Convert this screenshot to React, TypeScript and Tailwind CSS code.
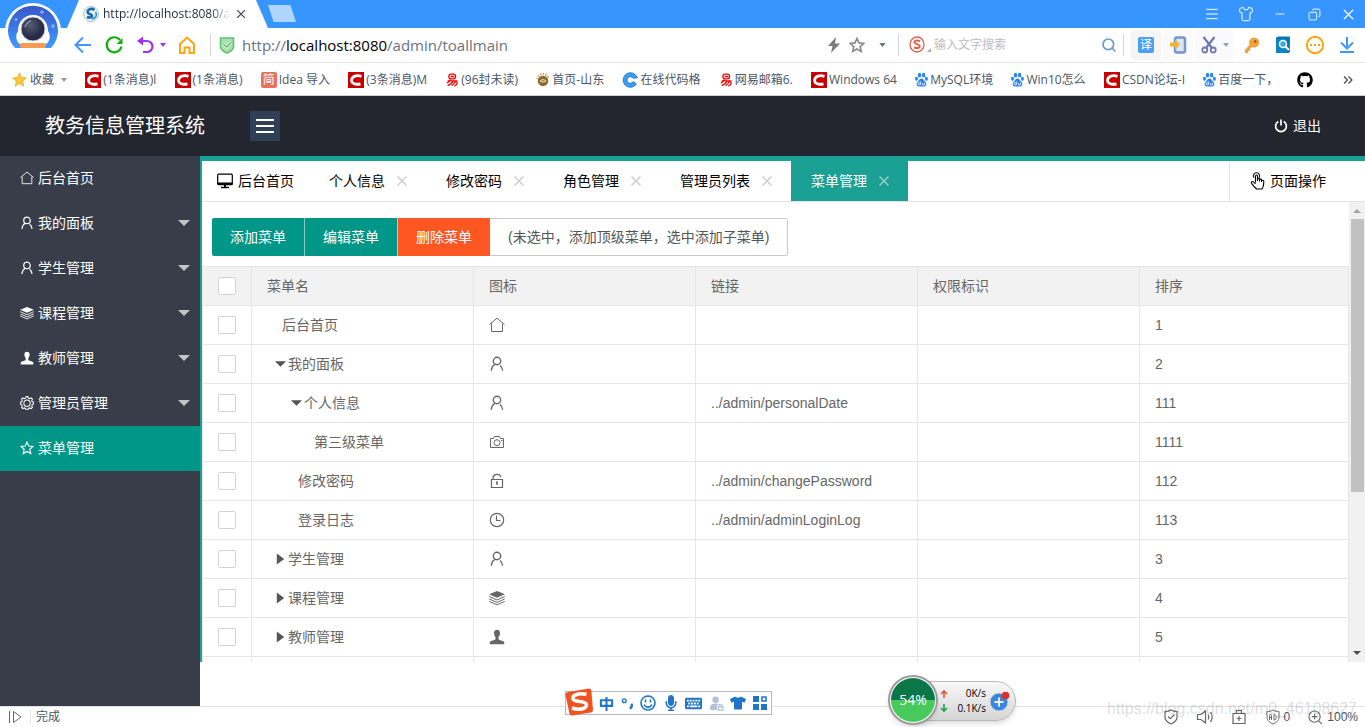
import { useState } from "react";
import type { ReactNode } from "react";
import { Copy, Menu, Minus, Search, Shirt, X } from "lucide-react";
import { FaGithub, FaKeyboard, FaMicrophone, FaTshirt } from "react-icons/fa";

type IconName =
  | "home"
  | "user"
  | "layers"
  | "username"
  | "gear"
  | "star"
  | "camera"
  | "lock"
  | "clock";

const UI_FONT = "[font-family:'Liberation_Sans','Noto_Sans_CJK_SC',sans-serif]";
const CHROME_FONT = "[font-family:'Open_Sans','Noto_Sans_CJK_SC',sans-serif]";

const menus: { name: string; icon: IconName; children: boolean }[] = [
  { name: "后台首页", icon: "home", children: false },
  { name: "我的面板", icon: "user", children: true },
  { name: "学生管理", icon: "user", children: true },
  { name: "课程管理", icon: "layers", children: true },
  { name: "教师管理", icon: "username", children: true },
  { name: "管理员管理", icon: "gear", children: true },
  { name: "菜单管理", icon: "star", children: false },
];

const tabs = ["个人信息", "修改密码", "角色管理", "管理员列表", "菜单管理"];

const rows: {
  name: string;
  icon: IconName;
  link: string;
  sort: string;
  pad: string;
  arrow?: "open" | "closed";
}[] = [
  { name: "后台首页", icon: "home", link: "", sort: "1", pad: "pl-[30px]" },
  { name: "我的面板", icon: "user", link: "", sort: "2", pad: "pl-[22px]", arrow: "open" },
  { name: "个人信息", icon: "user", link: "../admin/personalDate", sort: "111", pad: "pl-[38px]", arrow: "open" },
  { name: "第三级菜单", icon: "camera", link: "", sort: "1111", pad: "pl-[62px]" },
  { name: "修改密码", icon: "lock", link: "../admin/changePassword", sort: "112", pad: "pl-[46px]" },
  { name: "登录日志", icon: "clock", link: "../admin/adminLoginLog", sort: "113", pad: "pl-[46px]" },
  { name: "学生管理", icon: "user", link: "", sort: "3", pad: "pl-[22px]", arrow: "closed" },
  { name: "课程管理", icon: "layers", link: "", sort: "4", pad: "pl-[22px]", arrow: "closed" },
  { name: "教师管理", icon: "username", link: "", sort: "5", pad: "pl-[22px]", arrow: "closed" },
];

const bookmarks: { icon: string; text: string }[] = [
  { icon: "csdn", text: "(1条消息)l" },
  { icon: "csdn", text: "(1条消息)" },
  { icon: "jian", text: "Idea 导入" },
  { icon: "csdn", text: "(3条消息)M" },
  { icon: "netease", text: "(96封未读)" },
  { icon: "school", text: "首页-山东" },
  { icon: "code", text: "在线代码格" },
  { icon: "netease", text: "网易邮箱6." },
  { icon: "csdn", text: "Windows 64" },
  { icon: "baidu", text: "MySQL环境" },
  { icon: "baidu", text: "Win10怎么" },
  { icon: "csdn", text: "CSDN论坛-I" },
  { icon: "baidu", text: "百度一下，" },
];

function MenuIcon({ name, className }: { name: IconName; className: string }) {
  return (
    <svg viewBox="0 0 16 16" className={className} fill="none" stroke="currentColor" aria-hidden="true">
      {name === "home" && <path d="M.5 7.500 8 1.200l7.500 6.300M2.500 6.500v8h11v-8" />}
      {name === "user" && (
        <g strokeWidth="1.400">
          <circle cx="8" cy="5" r="3.700" />
          <path d="M6 8.300C3.800 9.500 2.500 11.500 2.300 14.800M11 9.500c1.600 1.200 2.500 3 2.700 5.300" />
        </g>
      )}
      {name === "layers" && (
        <>
          <path d="M8 1 15.800 4.300 8 7.800.2 4.300z" fill="currentColor" stroke="none" />
          <path d="M.3 6.500 8 10l7.700-3.500M.3 9 8 12.400 15.700 9M.3 11.400 8 14.800l7.700-3.400" />
        </>
      )}
      {name === "username" && (
        <path
          d="M8 .8c-2 0-3 1.300-3 3.300 0 1.700.7 3.300 1.500 4.100v1.700C6.300 11.200 1.500 11.600.8 13v2.300h14.400V13c-.7-1.400-5.500-1.800-5.700-3.100V8.200C10.300 7.400 11 5.800 11 4.100 11 2.100 10 .8 8 .8z"
          fill="currentColor"
          stroke="none"
        />
      )}
      {name === "gear" && (
        <g strokeWidth="1.200">
          <path d="M6.400 2.400 7 .7h2l.6 1.700 1.500.6 1.700-.8 1.400 1.400-.8 1.700.6 1.400 1.600.5v2l-1.600.6-.6 1.500.8 1.600-1.400 1.400-1.700-.7-1.500.6-.6 1.600H7l-.6-1.600-1.500-.6-1.700.7-1.400-1.400.8-1.600L2 9.800.4 9.200v-2L2 6.700l.6-1.400-.8-1.700 1.400-1.400 1.700.8z" />
          <circle cx="8" cy="8.200" r="3.600" />
        </g>
      )}
      {name === "star" && (
        <path d="m8 1.300 2 4.500 4.800.5-3.600 3.200 1.100 4.900L8 11.900l-4.300 2.500 1.100-4.900L1.200 6.300 6 5.800z" strokeWidth="1.300" />
      )}
      {name === "camera" && (
        <>
          <path d="M1.500 4.500h3l1-2h5l1 2h3v9h-13z" />
          <circle cx="8" cy="8.700" r="3" />
          <path d="M12 6.500h1.500" />
        </>
      )}
      {name === "lock" && (
        <>
          <path d="M2.500 6.500h11v8h-11zM4 6.500V4.300C4.500 2 6 1.300 8 1.300s3.500.7 4 2.500" strokeWidth="1.200" />
          <path d="M7 9.200h2M8 9v3" strokeWidth="1.400" />
        </>
      )}
      {name === "clock" && (
        <>
          <circle cx="8" cy="8" r="6.700" strokeWidth="1.200" />
          <path d="M7.500 3.500v5h4" strokeWidth="1.200" />
        </>
      )}
    </svg>
  );
}

function BookmarkIcon({ type }: { type: string }) {
  if (type === "csdn") {
    return (
      <svg viewBox="0 0 16 16" className="size-4 shrink-0">
        <path fill="#c80000" d="M0 0h16v16H0z" />
        <path d="M13.500 4.300C9 2.800 4 4 3.600 8c-.3 3.800 4.200 5 8.900 3.800" fill="none" stroke="#fff" strokeWidth="2.800" />
      </svg>
    );
  }
  if (type === "jian") {
    return (
      <span className="flex size-4 shrink-0 items-center justify-center rounded-xs bg-[#ea6f5a] text-xs text-white">简</span>
    );
  }
  if (type === "netease") {
    return (
      <svg viewBox="0 0 16 16" className="h-4 w-[14px] shrink-0" fill="none" stroke="#f00000" strokeWidth="1.500">
        <rect x="4.500" y="1.200" width="7.500" height="5.600" rx="2.400" />
        <path d="M6.500 4h4M3 9h10.500c1 3.500-.5 5.500-3 5.800M6 7.500C5 10 3.500 11 2 11.500M9 9.500c-1 2.500-3 4-6 4.800M12 9.500c-1 2-2 3.800-4.500 5" />
      </svg>
    );
  }
  if (type === "school") {
    return (
      <svg viewBox="0 0 16 16" className="size-[14px] shrink-0">
        <path d="M2 7a6 6 0 0 1 12 0" fill="none" stroke="#c7a869" strokeWidth="3" strokeDasharray="1.500 1.500" />
        <circle cx="8" cy="9" r="6" fill="#8a6a2c" />
        <path d="M4 9c2-2.500 6-2.500 8 0-2 2.500-6 2.500-8 0z" fill="#e5d8b8" />
        <path d="M6 9h4" stroke="#7f6228" />
      </svg>
    );
  }
  if (type === "code") {
    return (
      <svg viewBox="0 0 16 16" className="size-4 shrink-0">
        <path d="M13.500 2.800A7.300 7.300 0 1 0 14.500 12l-3.200-2.500a3.300 3.300 0 1 1-.2-3.300l4.300-.4z" fill="#35a0ff" stroke="#1c6fb8" strokeWidth=".8" />
      </svg>
    );
  }
  return (
    <svg viewBox="0 0 14 16" className="h-[15px] w-[13px] shrink-0" fill="#2b84f5">
      <ellipse cx="4.800" cy="3.300" rx="1.800" ry="2.600" />
      <ellipse cx="9.300" cy="3.300" rx="1.800" ry="2.600" />
      <ellipse cx="1.700" cy="7.300" rx="1.600" ry="2.200" />
      <ellipse cx="12.300" cy="7.300" rx="1.600" ry="2.200" />
      <path d="M7 7c-2 0-2.500 2-4 3.500C1 12.300 1.500 15.500 4 15.500h6c2.500 0 3-3.200 1-5C9.500 9 9 7 7 7z" />
      <path d="M5.800 10v3.800H4.200c-1.200 0-1.200-2.300 0-2.300h1.600M8 11.500v2.300h2.300v-2.300" fill="none" stroke="#fff" strokeWidth=".8" />
    </svg>
  );
}

function Caret({ className = "text-gray-500" }: { className?: string }) {
  return (
    <svg viewBox="0 0 8 5" className={`h-1 w-[7px] shrink-0 ${className}`}>
      <path d="M0 0h8L4 5z" fill="currentColor" />
    </svg>
  );
}

function TitleBar() {
  return (
    <div className="flex h-7 items-end bg-[#3795ff] pl-[67px]">
      <div className="flex h-7 w-[201px] items-center bg-white pr-5 pl-4 [clip-path:polygon(12px_0,189px_0,100%_100%,0_100%)]">
        <svg viewBox="0 0 16 16" className="size-4 shrink-0">
          <circle cx="8" cy="8" r="7.500" fill="#e8eef2" stroke="#b9c4cb" />
          <path d="M11.500 4C8 1.500 3.500 4 5 6.800c1 1.700 4 1.500 4 3.200 0 1.500-2.500 2-5 1" fill="none" stroke="#126cb4" strokeWidth="2.600" />
          <path d="M9 13c4-.5 5.500-4.500 3.500-7" fill="none" stroke="#1d8fd0" strokeWidth="1.600" />
        </svg>
        <span className="ml-1 w-[132px] bg-gradient-to-r from-gray-800 from-85% to-white bg-clip-text text-xs leading-7 whitespace-nowrap text-transparent">
          http://localhost:8080/a
        </span>
        <button aria-label="关闭标签" className="ml-1">
          <X size={14} strokeWidth={2} className="text-gray-600" />
        </button>
      </div>
      <button aria-label="新建标签" className="mb-[6px] h-[17px] w-7 bg-[#afd5ff] [clip-path:polygon(0_0,80%_0,100%_100%,20%_100%)]" />
      <div className="ml-auto flex h-7 text-white">
        <button aria-label="菜单" className="flex w-[34px] items-center justify-center"><Menu size={16} strokeWidth={1.500} /></button>
        <button aria-label="皮肤" className="flex w-[34px] items-center justify-center"><Shirt size={16} strokeWidth={1.500} /></button>
        <button aria-label="最小化" className="flex w-[34px] items-center justify-center"><Minus size={14} strokeWidth={1.500} /></button>
        <button aria-label="还原" className="flex w-[34px] items-center justify-center"><Copy size={13} strokeWidth={1.700} className="-scale-x-100" /></button>
        <button aria-label="关闭" className="flex w-[34px] items-center justify-center"><X size={17} strokeWidth={1.700} /></button>
      </div>
    </div>
  );
}

function AddressBar() {
  return (
    <div className="flex h-[35px] items-center border-b border-gray-200 bg-white pr-[10px] pl-[74px]">
      <button aria-label="后退" className="mr-3">
        <svg viewBox="0 0 18 18" className="size-[18px]" fill="none" stroke="#3f96fb" strokeWidth="2">
          <path d="M17 9H2M9 1.500 1.500 9 9 16.500" />
        </svg>
      </button>
      <button aria-label="刷新" className="mr-3">
        <svg viewBox="0 0 20 20" className="size-5" fill="none" stroke="#12b012" strokeWidth="2.200">
          <path d="M17.500 11.500A7.500 7.500 0 1 1 16 5" />
          <path d="M18.500 3v6h-6z" fill="#12b012" stroke="none" />
        </svg>
      </button>
      <button aria-label="撤销" className="mr-3 flex items-center gap-[6px]">
        <svg viewBox="0 0 18 18" className="size-[18px]" fill="none" stroke="#a033f0" strokeWidth="2.200">
          <path d="M4 5h7a5.500 5.500 0 0 1 0 11H7" />
          <path d="M7 .5v9L1 5z" fill="#a033f0" stroke="none" />
        </svg>
        <svg viewBox="0 0 6 4" className="h-1 w-[6px]"><path d="M0 0h6L3 4z" fill="#a033f0" /></svg>
      </button>
      <button aria-label="主页" className="mr-[14px]">
        <svg viewBox="0 0 18 18" className="size-[18px]" fill="none" stroke="#ffa30f" strokeWidth="2">
          <path d="M2 8 9 1.500 16 8v9h-4.500v-5.500h-5V17H2z" />
        </svg>
      </button>
      <span className="h-[22px] w-px bg-gray-300" />
      <svg viewBox="0 0 16 18" className="mr-[7px] ml-2 h-[18px] w-4" fill="none" stroke="#5cc16a">
        <path d="M1.500 2h13v9c0 2.500-3 4.500-6.500 6-3.500-1.500-6.500-3.500-6.500-6z" fill="#a9e0b0" strokeWidth="1.500" />
        <path d="m4.500 8 3 3 4.500-4.500" stroke="#fff" strokeWidth="3" />
        <path d="m4.500 8 3 3 4.500-4.500" strokeWidth="1.500" />
      </svg>
      <div role="textbox" aria-label="地址栏" className="min-w-0 flex-1 truncate text-[15px] text-gray-500">
        http://<span className="text-black">localhost:8080</span>/admin/toallmain
      </div>
      <svg viewBox="0 0 14 18" className="mr-2 h-[18px] w-[14px]" fill="#7c7c7c">
        <path d="M9 1 1 10h4.500L4 17l9-9.500H8z" />
      </svg>
      <button aria-label="收藏此页" className="mr-[14px]">
        <svg viewBox="0 0 16 16" className="size-4" fill="none" stroke="#8b8b8b" strokeWidth="1.700">
          <path d="m8 1.500 2 4.400 4.700.6-3.500 3.200 1 4.700L8 12l-4.200 2.400 1-4.700L1.300 6.500 6 5.900z" />
        </svg>
      </button>
      <Caret />
      <span className="mr-[10px] ml-3 h-[22px] w-px bg-gray-300" />
      <svg viewBox="0 0 22 18" className="mr-[3px] h-[18px] w-[22px]" fill="none" stroke="#e2604e">
        <ellipse cx="8" cy="8.500" rx="7" ry="7.500" strokeWidth="1.300" />
        <path d="M11 5.300C8 3.800 5 4.800 5.500 6.800c.5 1.500 5 1.300 5.200 3.300.1 2-3.200 2.500-5.700 1.200" strokeWidth="2" />
        <path d="M22 12v4h-4z" fill="#aaa" stroke="none" />
      </svg>
      <input aria-label="搜索" placeholder="输入文字搜索" className="w-[167px] text-xs outline-none placeholder:text-[#bcbcbc]" />
      <button aria-label="开始搜索" className="mr-[6px]">
        <Search size={16} strokeWidth={2.500} className="text-[#6c9ac8]" />
      </button>
      <span className="mr-[7px] h-[22px] w-px bg-gray-300" />
      <button aria-label="翻译" className="mr-[2px] flex h-[30px] w-[30px] items-center justify-center rounded bg-[#f5f5f5]">
        <span className="flex size-4 items-center justify-center rounded-xs bg-[#4a9ff5] text-xs text-white">译</span>
      </button>
      <button aria-label="手机" className="mr-[2px] flex h-[30px] w-[30px] items-center justify-center rounded bg-[#fafafa]">
        <svg viewBox="0 0 18 18" className="size-[18px]">
          <rect x="6" y="1.500" width="10" height="15" rx="2" fill="#dbe6f5" stroke="#7497cb" strokeWidth="2.500" />
          <path d="M1 6.500h5V3l5 5.500L6 14v-3.500H1z" fill="#f9b136" />
        </svg>
      </button>
      <button aria-label="截图" className="mr-[10px] flex h-[30px] w-[39px] items-center justify-center gap-[6px] rounded bg-[#fafafa]">
        <svg viewBox="0 0 16 18" className="h-[18px] w-4" fill="none" stroke="#6f78b8" strokeWidth="2.200">
          <path d="m2.500 1 8.500 11M13.500 1 5 12" />
          <circle cx="3.800" cy="14" r="2.500" strokeWidth="1.800" />
          <circle cx="12.200" cy="14" r="2.500" strokeWidth="1.800" />
        </svg>
        <svg viewBox="0 0 6 4" className="h-1 w-[6px] text-gray-400"><path d="M0 0h6L3 4z" fill="currentColor" /></svg>
      </button>
      <button aria-label="密码" className="mr-[15px]">
        <svg viewBox="0 0 16 18" className="h-[18px] w-4">
          <path d="M10 1.500a5 5 0 0 0-4.500 7L1 14v3h3v-2h2v-2.200l2-1.800a5 5 0 1 0 2-9.500z" fill="#f3a23a" />
          <circle cx="11.200" cy="5.500" r="1.400" fill="#a9652a" />
        </svg>
      </button>
      <button aria-label="查找" className="mr-[14px]">
        <svg viewBox="0 0 16 18" className="h-[18px] w-4">
          <path d="M1 2 3 .5h12v15L13.500 17H1z" fill="#0b86c5" />
          <path d="M1 2h12v15" fill="none" stroke="#07639a" />
          <circle cx="8" cy="8" r="3.500" fill="#3ba9e0" stroke="#fff" strokeWidth="1.500" />
          <path d="m10.500 10.500 3.500 3.500" stroke="#fff" strokeWidth="2" />
        </svg>
      </button>
      <button aria-label="更多" className="mr-[14px]">
        <svg viewBox="0 0 20 20" className="size-5">
          <circle cx="10" cy="10" r="8.200" fill="none" stroke="#ffa60d" strokeWidth="2" />
          <path d="M5 9h2v2H5zM9 9h2v2H9zM13 9h2v2h-2z" fill="#ffa60d" />
        </svg>
      </button>
      <button aria-label="下载">
        <svg viewBox="0 0 16 18" className="h-[18px] w-4" fill="none" stroke="#3e97fc" strokeWidth="2">
          <path d="M8 1v11M2 6.500l6 6 6-6M1 16h14" />
        </svg>
      </button>
    </div>
  );
}

function Bookmarks() {
  return (
    <nav className="flex h-[33px] items-center justify-between border-b border-[#ccc] bg-white pt-px pr-3 pl-3 text-xs whitespace-nowrap text-gray-600">
      <a href="#" className="flex items-center gap-[3px]">
        <svg viewBox="0 0 16 16" className="size-[15px]">
          <path d="m8 .8 2.200 4.900 5.300.6-4 3.600 1.200 5.300L8 12.400l-4.700 2.800 1.200-5.300-4-3.600 5.300-.6z" fill="#f8c73b" stroke="#e0a52a" strokeWidth=".6" />
        </svg>
        收藏
        <svg viewBox="0 0 6 4" className="ml-1 h-1 w-[6px]"><path d="M0 0h6L3 4z" fill="#999" /></svg>
      </a>
      {bookmarks.map((item, idx) => (
        <a href="#" key={idx} className="flex items-center gap-[2px]">
          <BookmarkIcon type={item.icon} />
          {item.text}
        </a>
      ))}
      <a href="#" aria-label="GitHub"><FaGithub size={16} className="text-black" /></a>
      <button aria-label="更多书签" className="pl-3">
        <svg viewBox="0 0 10 8" className="h-2 w-[10px]" fill="none" stroke="#444" strokeWidth="1.200">
          <path d="m1 .5 3.500 3.500L1 7.500M5.500.5 9 4 5.500 7.500" />
        </svg>
      </button>
    </nav>
  );
}

function Astronaut() {
  return (
    <svg viewBox="0 0 56 50" className="absolute top-[2px] left-[5px] h-[50px] w-14">
      <defs>
        <linearGradient id="sky" x1="0" y1="0" x2="0" y2="1">
          <stop offset="0" stopColor="#3a56c8" />
          <stop offset="1" stopColor="#3d9bff" />
        </linearGradient>
        <radialGradient id="visor" cx=".4" cy=".35">
          <stop offset="0" stopColor="#555a72" />
          <stop offset="1" stopColor="#262a45" />
        </radialGradient>
      </defs>
      <circle cx="28" cy="29" r="28" fill="#fff" />
      <path d="M10 46A25 25 0 1 1 46 46z" fill="url(#sky)" />
      <path d="M37 8v4M35 10h4M11 16v3M9.500 17.500h3M48 22v4M46 24h4" stroke="#9dc2ff" />
      <path d="M15 42c-4-2-5-9-2-13 0-9 6-16 15-16s15 7 15 16c3 4 2 11-2 13z" fill="#fff" />
      <circle cx="28" cy="27" r="12" fill="url(#visor)" stroke="#c9cede" />
      <path d="M20 25a9 9 0 0 1 6-6" fill="none" stroke="#8b90a8" strokeWidth="1.500" />
      <rect x="15" y="41" width="26" height="5" rx="2" fill="#f59b52" />
    </svg>
  );
}

function Sidebar() {
  const [active, setActive] = useState("菜单管理");
  return (
    <aside className="w-[200px] shrink-0 bg-[#393d49] text-sm text-white">
      {menus.map((menu) => (
        <a
          href="#"
          key={menu.name}
          onClick={() => setActive(menu.name)}
          className={`flex h-[45px] items-center pr-[10px] pb-[2px] pl-5 ${active === menu.name ? "bg-[#009688]" : ""}`}
        >
          <MenuIcon name={menu.icon} className="mr-1 size-[14px] shrink-0" />
          {menu.name}
          {menu.children && (
            <svg viewBox="0 0 12 6" className="ml-auto h-[6px] w-3"><path d="M0 0h12L6 6z" fill="#c4c5c9" /></svg>
          )}
        </a>
      ))}
    </aside>
  );
}

function TabBar() {
  return (
    <div className="flex h-[41px] shrink-0 border-b border-[#e2e2e2] text-sm text-black">
      <button className="flex w-[107px] items-center gap-1 pl-[14px]">
        <svg viewBox="0 0 18 16" className="h-4 w-[18px]" fill="none" stroke="currentColor">
          <rect x="1.700" y="1.200" width="14.600" height="10.500" rx="1" strokeWidth="1.200" />
          <path d="M1.500 10.500h15M9 12v2" strokeWidth="2" />
          <path d="M5 14.500h8" strokeWidth="1.400" />
        </svg>
        后台首页
      </button>
      {tabs.map((tab) => (
        <div
          key={tab}
          className={`flex items-center gap-3 pr-[19px] pl-5 ${tab === "菜单管理" ? "bg-[#1aa094] text-white" : ""}`}
        >
          <button>{tab}</button>
          <button aria-label={`关闭${tab}`}>
            <svg viewBox="0 0 10 10" className="size-[10px]" stroke={tab === "菜单管理" ? "#a5cfcb" : "#c9c9c9"} strokeWidth="1.300">
              <path d="m.5.5 9 9M9.500.5l-9 9" />
            </svg>
          </button>
        </div>
      ))}
      <button className="ml-auto flex w-[136px] items-center gap-1 border-l border-[#e2e2e2] pl-5">
        <svg viewBox="0 0 16 18" className="h-[18px] w-4" fill="none" stroke="currentColor" strokeWidth="1.100">
          <path d="M5.500 10.500V4.200c0-1.600 2-1.600 2 0V9M7.500 9V7.200c0-1.200 2-1.200 2 0V9.500M9.500 8c0-1.200 2-1.200 2 0v2M11.500 9c0-1.100 2.300-1.100 2.300.3 0 3 .2 5-1.800 7.700H6.500C4.500 15 3 13.300 1.500 11.300c-.6-1.300.7-2.300 1.900-1.400l2.100 2" />
          <path d="M4 5.800C2.500 3.500 4 .8 6.500.8s4 2.700 2.500 5" />
        </svg>
        页面操作
      </button>
    </div>
  );
}

function Check({ label }: { label: string }) {
  return (
    <input
      type="checkbox"
      aria-label={label}
      className="block size-[18px] appearance-none rounded-xs border border-[#d2d2d2] bg-white checked:bg-[#009688]"
    />
  );
}

function Cell({ className = "px-[15px]", children }: { className?: string; children?: ReactNode }) {
  return <td className={`h-[39px] border-r border-b border-[#e6e6e6] ${className}`}>{children}</td>;
}

function MenuTable() {
  return (
    <table className="w-full table-fixed border-separate border-spacing-0 border-t border-l border-[#e6e6e6] text-left text-sm text-[#666]">
      <thead className="bg-[#f2f2f2]">
        <tr>
          <th className="h-[39px] w-[49px] border-r border-b border-[#e6e6e6] pl-[15px]"><Check label="全选" /></th>
          {["菜单名", "图标", "链接", "权限标识"].map((title) => (
            <th key={title} className="w-[222px] border-r border-b border-[#e6e6e6] px-[15px] font-normal">{title}</th>
          ))}
          <th className="border-r border-b border-[#e6e6e6] px-[15px] font-normal">排序</th>
        </tr>
      </thead>
      <tbody>
        {rows.map((row) => (
          <tr key={row.sort}>
            <Cell className="pl-[15px]"><Check label={row.name} /></Cell>
            <Cell className={row.pad}>
              <span className="flex items-center">
                {row.arrow && (
                  <svg viewBox="0 0 14 12" className="mr-px h-3 w-[13px]" fill="#555">
                    {row.arrow === "open" ? <path d="M1 3h12L7 9z" /> : <path d="M3 0v12l8-6z" />}
                  </svg>
                )}
                {row.name}
              </span>
            </Cell>
            <Cell><MenuIcon name={row.icon} className="size-4" /></Cell>
            <Cell>{row.link}</Cell>
            <Cell />
            <Cell>{row.sort}</Cell>
          </tr>
        ))}
        {/* next row, cut by the bottom of the frame */}
        <tr><Cell /><Cell /><Cell /><Cell /><Cell /><Cell /></tr>
      </tbody>
    </table>
  );
}

function ScrollBar() {
  return (
    <div className="flex w-4 shrink-0 flex-col items-center bg-[#f1f1f1]">
      <svg viewBox="0 0 16 17" className="h-[17px] w-4"><path d="M4 11h8L8 7z" fill="#a3a3a3" /></svg>
      <div className="w-full flex-1 pr-px pl-[2px]">
        <div className="h-[64%] bg-[#c1c1c1]" />
      </div>
      <svg viewBox="0 0 16 17" className="h-[17px] w-4"><path d="M4 6h8l-4 4z" fill="#505050" /></svg>
    </div>
  );
}

function InputMethodBar() {
  return (
    <div className="absolute bottom-3 left-[565px] flex h-6 w-[207px] items-center justify-between border border-[#b4b8c0] bg-white pr-[4px] pl-[33px] text-[#2175c8]">
      <svg viewBox="0 0 28 28" className="absolute -top-1 -left-px size-7">
        <path d="M3 4 24 .5q2 0 2.300 1.800L28 22q0 2-2 2.500L7 27.500q-2 .2-2.500-1.800L.5 7Q.5 4.500 3 4z" fill="#f0531f" />
        <path d="M21.500 6.500C14 4.500 7 7 8 11c1 3.500 13 1.500 13.500 5.500C22 21 13 22.500 7 20" fill="none" stroke="#fff" strokeWidth="3.600" />
      </svg>
      <svg viewBox="0 0 16 16" className="size-[15px]" fill="none" stroke="currentColor" strokeWidth="2.200">
        <path d="M2 4.500h12v6H2zM8 1v15" />
      </svg>
      <svg viewBox="0 0 14 14" className="size-[13px]" fill="none" stroke="currentColor" strokeWidth="1.500">
        <circle cx="3.500" cy="4" r="2" />
        <path d="M11 7.500c1.500 1.500.5 4-1.500 5" strokeWidth="2.600" />
      </svg>
      <svg viewBox="0 0 16 16" className="size-4" fill="none" stroke="currentColor" strokeWidth="1.600">
        <circle cx="8" cy="8" r="7" />
        <path d="M5.500 4.500v3M10.500 4.500v3M4 9.500c1.500 3.500 6.500 3.500 8 0" />
      </svg>
      <FaMicrophone size={16} />
      <FaKeyboard size={17} />
      <svg viewBox="0 0 16 16" className="size-[15px]" fill="#b4c0d8">
        <circle cx="7" cy="4" r="3.500" />
        <path d="M1 15c0-4 1-7 6-7 2 0 3 .5 4 1.500H8.500V15z" />
        <path d="M10 11.500h5V15h-5zM11.200 11V9.500h2.600V11" fill="none" stroke="#b4c0d8" strokeWidth="1.300" />
      </svg>
      <FaTshirt size={16} />
      <svg viewBox="0 0 14 14" className="size-[14px]" fill="currentColor">
        <path d="M0 0h6v6H0zM0 8h6v6H0zM8 8h6v6H8z" />
        <path d="M9 1h4v4H9z" fill="none" stroke="currentColor" strokeWidth="1.600" />
      </svg>
    </div>
  );
}

function SpeedBall() {
  return (
    <div className="absolute right-[349px] bottom-[6px] flex h-10 w-[108px] items-center rounded-r-full border border-[#b9b9b9] bg-gradient-to-b from-[#f8f8f8] to-[#d5d5d5] pl-[31px] text-[10px] text-black shadow-md [font-family:'Open_Sans',sans-serif]">
      <div className="absolute -top-[7px] -left-[21px] flex size-[50px] items-center justify-center rounded-full border-2 border-[#9c9c9c] bg-white p-px shadow-md">
        <div className="flex size-full items-center justify-center rounded-full bg-gradient-to-b from-[#0b7748] from-50% to-[#47c95c] to-50% text-sm text-white">54%</div>
      </div>
      <svg viewBox="0 0 8 24" className="h-6 w-2" fill="none" strokeWidth="1.600">
        <path d="M4 9V2M1 5l3-3 3 3" stroke="#e8543a" />
        <path d="M4 15v7M1 19l3 3 3-3" stroke="#1f9d50" />
      </svg>
      <div className="flex-1 text-right leading-[15px]">
        <p>0K/s</p>
        <p>0.1K/s</p>
      </div>
      <svg viewBox="0 0 22 22" className="mr-1 ml-[3px] size-[22px]">
        <circle cx="10" cy="12" r="9" fill="#3b86dc" stroke="#cfd5dd" />
        <path d="M10 7.500v9M5.500 12h9" stroke="#e5f1ff" strokeWidth="2" />
        <circle cx="16.500" cy="5.500" r="3.800" fill="#d9302c" />
      </svg>
    </div>
  );
}

function StatusBar() {
  return (
    <footer className="flex h-[21px] shrink-0 items-center border-t border-[#e2e2e2] bg-white pr-[7px] pl-2 text-xs text-gray-600">
      <svg viewBox="0 0 16 14" className="h-[14px] w-4" fill="none" stroke="#666">
        <path d="M1.500 1v12M5.500 1.500v11L13 7z" />
      </svg>
      <span className="mr-[5px] ml-[6px] h-4 w-px bg-gray-200" />
      <span className="mr-auto">完成</span>
      <svg viewBox="0 0 14 16" className="mr-[18px] h-4 w-[14px]" fill="none" stroke="#666" strokeWidth="1.200">
        <path d="M7 1c2 1.200 4 1.500 6 1.500v6c0 3-3 5-6 6.500-3-1.500-6-3.500-6-6.500v-6C3 2.500 5 2.200 7 1z" />
        <path d="m4 7.500 2.200 2.200L10.500 5.500" />
      </svg>
      <svg viewBox="0 0 18 16" className="mr-[18px] h-4 w-[18px]" fill="none" stroke="#666" strokeWidth="1.200">
        <path d="M1.500 5.500H5L9.500 2v12L5 10.500H1.500zM12 5.500c1 1.500 1 3.500 0 5M14.500 3c2 3 2 7 0 10" />
      </svg>
      <svg viewBox="0 0 14 16" className="mr-5 h-4 w-[14px]" fill="none" stroke="#666" strokeWidth="1.200">
        <path d="M1 4.500h12v10H1zM4.500 4.500V1.500h5v3M7 7v5M4.500 9.500h5" />
      </svg>
      <svg viewBox="0 0 14 16" className="mr-1 h-4 w-[14px]" fill="none" stroke="#666">
        <path d="M7 1c2 1.200 4 1.500 6 1.500v6c0 3-3 5-6 6.500-3-1.500-6-3.500-6-6.500v-6C3 2.500 5 2.200 7 1z" />
        <path d="M3.500 11V6.500L4.500 5l1 1.500V11M3.500 8.500h2M8 5.500V11c3 0 3-5.500 0-5.500z" />
      </svg>
      <span className="mr-[18px]">0</span>
      <svg viewBox="0 0 16 16" className="mr-1 size-[15px]" fill="none" stroke="#666" strokeWidth="1.200">
        <circle cx="7" cy="7" r="6" />
        <path d="m11.500 11.500 3.500 3.500M7 4v6M4 7h6" />
      </svg>
      <span>100%</span>
    </footer>
  );
}

export default function App() {
  return (
    <div className={`relative flex h-screen flex-col overflow-hidden bg-white ${UI_FONT}`}>
      <header className={`relative shrink-0 ${CHROME_FONT}`}>
        <TitleBar />
        <AddressBar />
        <Bookmarks />
        <Astronaut />
      </header>

      <div className="flex h-[60px] shrink-0 items-center bg-[#23262e] text-white">
        <h1 className="w-[250px] pl-[45px] text-xl">教务信息管理系统</h1>
        <button aria-label="收起菜单" className="flex size-[30px] items-center justify-center bg-[#2f4056]">
          <svg viewBox="0 0 18 16" className="h-4 w-[18px]" stroke="#fff" strokeWidth="2"><path d="M0 2h18M0 8h18M0 14h18" /></svg>
        </button>
        <a href="#" className="mr-11 ml-auto flex items-center gap-[5px] text-sm">
          <svg viewBox="0 0 14 14" className="size-[14px]" fill="none" stroke="currentColor" strokeWidth="1.700">
            <path d="M4.300 2.500a5.400 5.400 0 1 0 5.400 0M7 .5v6" />
          </svg>
          退出
        </a>
      </div>

      <div className="flex min-h-0 flex-1">
        <Sidebar />
        <main className="flex min-w-0 flex-1 flex-col pb-11">
          <div className="flex min-h-0 flex-1 flex-col border-t-[5px] border-l-2 border-[#1aa094]">
            <TabBar />
            <div className="flex min-h-0 flex-1">
              <div className="min-w-0 flex-1 overflow-hidden">
                <div className="flex px-[10px] pt-4 pb-[10px] text-sm text-white">
                  <button className="h-[38px] rounded-l-xs bg-[#009688] px-[18px]">添加菜单</button>
                  <button className="h-[38px] border-l border-white/50 bg-[#009688] px-[18px]">编辑菜单</button>
                  <button className="h-[38px] border-l border-white/50 bg-[#ff5722] px-[18px]">删除菜单</button>
                  <button className="h-[38px] rounded-r-xs border border-l-0 border-[#c9c9c9] bg-white px-[18px] text-[#555]">
                    (未选中，添加顶级菜单，选中添加子菜单)
                  </button>
                </div>
                <MenuTable />
              </div>
              <ScrollBar />
            </div>
          </div>
        </main>
      </div>

      <StatusBar />
      <InputMethodBar />
      <SpeedBall />
      <span className="pointer-events-none absolute right-2 bottom-1 text-base leading-7 text-black/15">
        https://blog.csdn.net/m0_46108627
      </span>
    </div>
  );
}
